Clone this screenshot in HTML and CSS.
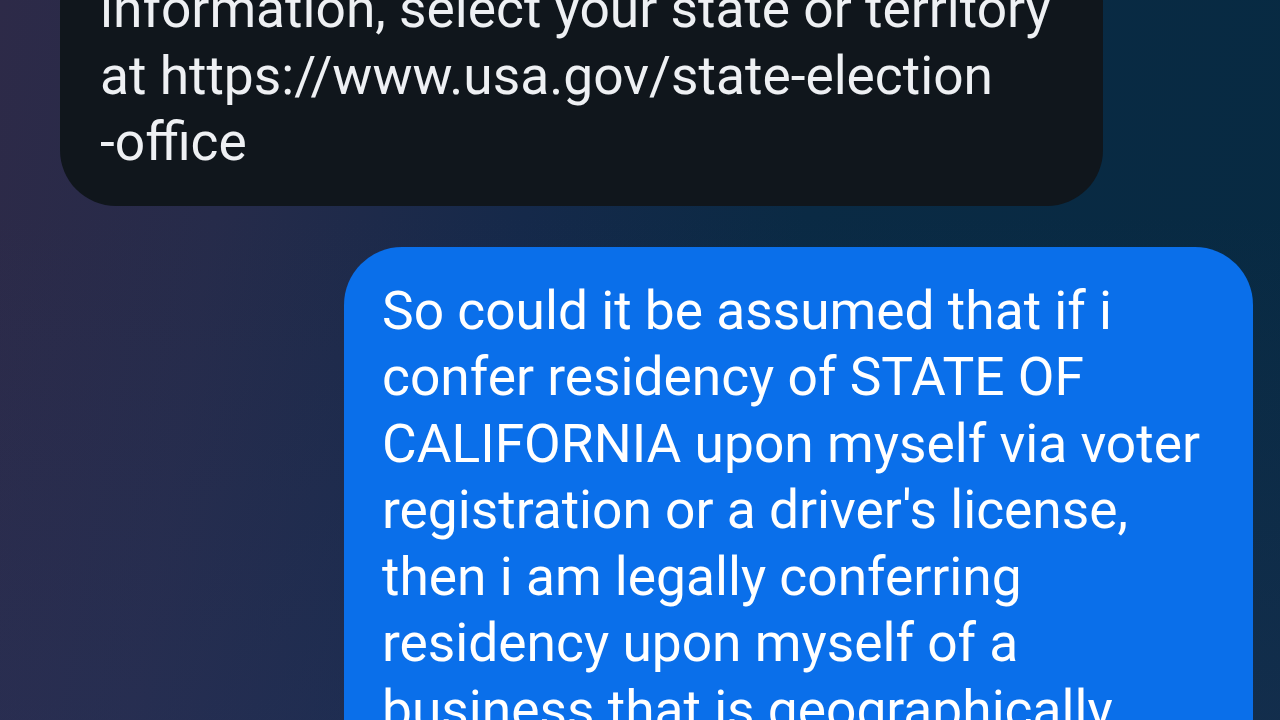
FILE: index.html
```html
<!DOCTYPE html>
<html lang="en">
<head>
<meta charset="utf-8">
<title>Chat</title>
<link rel="stylesheet" href="styles.css">
</head>
<body>
<main class="chat">
  <div class="bubble bubble-in">
    <p class="msg">information, select your state or territory<br>at https://www.usa.gov/state-election<br>-office</p>
  </div>
  <div class="bubble bubble-out">
    <p class="msg">So could it be assumed that if i confer residency of STATE OF CALIFORNIA upon myself via voter registration or a driver's license, then i am legally conferring residency upon myself of a business that is geographically</p>
  </div>
</main>
</body>
</html>
```

FILE: styles.css
```css
html, body {
  margin: 0;
  padding: 0;
}

body {
  width: 1280px;
  height: 720px;
  overflow: hidden;
  font-family: Roboto, "Noto Sans", "Liberation Sans", sans-serif;
  background:
    linear-gradient(to bottom, rgba(40, 52, 95, 0) 30%, rgba(40, 52, 95, 0.35) 100%),
    linear-gradient(100deg, #2d2a48 0%, #262b4a 18%, #15294a 40%, #0a2a44 60%, #072a42 100%);
}

.chat {
  display: flex;
  flex-direction: column;
  gap: 41px;
  margin-top: -54px;
  padding: 0 27px 0 60px;
}

.bubble {
  box-sizing: border-box;
  padding: 30px 39px 30px 40px;
  border-radius: 56px;
}

.bubble-in {
  width: 1043px;
  align-self: flex-start;
  background: #10161c;
  color: #eef0f3;
}

.bubble-out {
  width: 909px;
  align-self: flex-end;
  background: #0a6fea;
  color: #ffffff;
  padding: 31px 30px 120px 38px;
  border-radius: 58px;
}

.msg {
  margin: 0;
  font-size: 53.3px;
  line-height: 66.5px;
  font-weight: 400;
}
```
